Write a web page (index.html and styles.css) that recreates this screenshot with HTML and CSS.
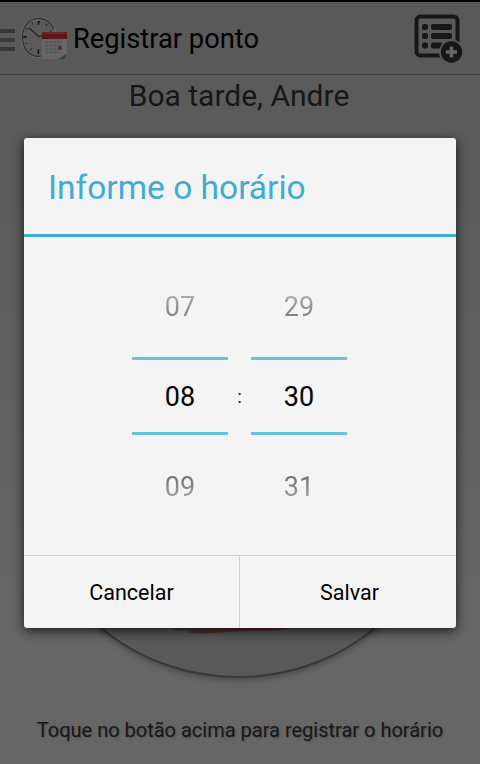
FILE: index.html
```html
<!DOCTYPE html>
<html lang="pt-BR">
<head>
    <meta charset="utf-8">
    <title>Registrar ponto</title>
    <link rel="stylesheet" href="styles.css">
</head>
<body>
    <div class="screen">
        <header class="action-bar">
            <div class="drawer-icon"><span></span><span></span><span></span></div>
            <svg class="app-icon" width="48" height="46" viewBox="0 0 48 46">
                <ellipse cx="18" cy="20.500" rx="17.500" ry="20" fill="#5a5a5a" stroke="#686868" stroke-width="1.500"/>
                <path d="M33 12C27-1 12-2 5 8C-2 19 2 34 11 38Q15 40 20 39" fill="none" stroke="#303030" stroke-width="1.200"/>
                <ellipse cx="17.500" cy="20" rx="13.500" ry="15" fill="none" stroke="#242424" stroke-width="2" stroke-dasharray="1 6.480"/>
                <path d="M17.500 4v4M2 20h4M17.500 32v5" stroke="#181818" stroke-width="1.500"/>
                <path d="M8 11l10 8.500 4-1" fill="none" stroke="#222" stroke-width="1.200"/>
                <path d="M21 17h25v20l-7 5H21z" fill="#676767"/>
                <path d="M21 15h25v7H21z" fill="#5f1618"/>
                <path d="M21 15h25v2H21z" fill="#6b2426"/>
                <path d="M24 25h17M24 28.500h17M24 32h17M24 35.500h15M26 24v13M30 24v13M34 24v13M38 24v11" stroke="#535957" stroke-width="1"/>
                <rect x="37.500" y="29" width="3" height="4" fill="#622326"/>
                <path d="M37 42l9-5-3 5z" fill="#3d3d3d"/>
            </svg>
            <h1 class="title">Registrar ponto</h1>
            <svg class="add-icon" width="50" height="50" viewBox="0 0 50 50">
                <rect x="3.500" y="3.500" width="41" height="39" rx="4" fill="none" stroke="#171717" stroke-width="4"/>
                <g fill="#171717">
                    <rect x="9" y="11" width="6" height="6" rx="2"/>
                    <rect x="9" y="20" width="6" height="6" rx="2"/>
                    <rect x="9" y="29.500" width="6" height="6" rx="2"/>
                    <rect x="18" y="11" width="21" height="6" rx="2"/>
                    <rect x="18" y="20" width="21" height="6" rx="2"/>
                    <rect x="18" y="29.500" width="12" height="6" rx="2"/>
                </g>
                <circle cx="38.500" cy="39" r="12.500" fill="#595959"/>
                <circle cx="38.500" cy="39" r="10.700" fill="#171717"/>
                <path d="M38.500 33.500v11M33 39h11" stroke="#666" stroke-width="3.600"/>
            </svg>
        </header>
        <main class="content">
            <p class="greeting">Boa tarde, Andre</p>
            <div class="punch-button">
                <svg width="406" height="378" viewBox="0 0 406 378">
                    <path d="M136 332q30-6 50-8h86q-14 9-44 9t-50 2q-20 1-26-1l20-3z" fill="#572f2f"/>
                    <path d="M136 332l30-5h40l-42 6z" fill="#453e3e"/>
                </svg>
            </div>
            <p class="hint">Toque no botão acima para registrar o horário</p>
        </main>
    </div>

    <div class="dialog">
        <h2 class="dialog-title">Informe o horário</h2>
        <div class="time-picker">
            <div class="picker">
                <div class="previous">07</div>
                <div class="current">08</div>
                <div class="next">09</div>
            </div>
            <div class="divider">:</div>
            <div class="picker">
                <div class="previous">29</div>
                <div class="current">30</div>
                <div class="next">31</div>
            </div>
        </div>
        <div class="buttons">
            <button type="button">Cancelar</button>
            <button type="button">Salvar</button>
        </div>
    </div>
</body>
</html>
```

FILE: styles.css
```css
* {
    box-sizing: border-box;
}

body {
    margin: 0;
    font-family: Roboto, sans-serif;
    background-color: #000;
    color: #000;
}

h1,
h2,
p {
    margin: 0;
    font-weight: normal;
    white-space: nowrap;
}

.screen {
    height: 764px;
    padding-top: 2px;
    display: flex;
    flex-direction: column;
    overflow: hidden;
}

.action-bar {
    height: 73px;
    flex: none;
    display: flex;
    align-items: center;
    background-color: #595959;
    border-bottom: 1px solid #3f3f3f;
}

.drawer-icon {
    width: 15px;
    margin-top: 3px;
    display: flex;
    flex-direction: column;
    gap: 5px;
}

.drawer-icon span {
    height: 4px;
    background-color: #393939;
}

.app-icon {
    margin: 3px 0 0 6px;
}

.title {
    margin: 2px 0 0 4px;
    font-size: 27.300px;
    line-height: 32px;
}

.add-icon {
    margin: 0 17px 1px auto;
}

.content {
    flex: 1;
    display: flex;
    flex-direction: column;
    align-items: center;
    background: linear-gradient(#5a5a5a, #666 80%);
}

.greeting {
    margin: 3px 2px 0 0;
    font-size: 30px;
    line-height: 36px;
    color: #171717;
}

.punch-button {
    width: 410px;
    height: 382px;
    margin: 182px 5px 0 0;
    flex: none;
    border-radius: 50%;
    border: 2px solid #383838;
    background-color: #595959;
    box-shadow: 0 2px 6px rgba(0, 0, 0, 0.3);
}

.hint {
    margin-top: 40px;
    font-size: 20px;
    line-height: 24px;
    color: #171717;
    text-shadow: 1px 1px 2px rgba(0, 0, 0, 0.25);
}

/* dialog floats over the screen */
.dialog {
    position: absolute;
    top: 138px;
    left: 24px;
    width: 432px;
    height: 490px;
    display: flex;
    flex-direction: column;
    background-color: #f4f4f4;
    border-radius: 3px;
    box-shadow: 0 3px 12px rgba(0, 0, 0, 0.75);
}

.dialog-title {
    height: 99px;
    padding-left: 24px;
    font-size: 33.500px;
    line-height: 99px;
    color: #40acd3;
    border-bottom: 3px solid #40acd0;
}

.time-picker {
    flex: 1;
    padding: 33px 1px 0 0;
    display: flex;
    justify-content: center;
    font-size: 27px;
    text-align: center;
}

.picker {
    width: 96px;
}

.previous,
.next {
    color: transparent;
    -webkit-background-clip: text;
    background-clip: text;
}

.previous {
    height: 87px;
    line-height: 74px;
    background-image: linear-gradient(#bbb 20%, #6c6c6c 65%);
}

.current {
    height: 78px;
    line-height: 74px;
    border-top: 3px solid #6cc0dc;
    border-bottom: 3px solid #6cc0dc;
}

.next {
    height: 87px;
    line-height: 105px;
    background-image: linear-gradient(#6c6c6c 45%, #bbb 85%);
}

.divider {
    width: 23px;
    padding-top: 115px;
    font-size: 19px;
    line-height: 24px;
    color: #222;
}

.buttons {
    height: 73px;
    display: flex;
    border-top: 1px solid #d2d2d2;
}

.buttons button {
    width: 217px;
    padding: 1px 0 0;
    border: none;
    background: none;
    font-family: inherit;
    font-size: 21.500px;
    color: #000;
}

.buttons button:first-child {
    width: 215px;
}

.buttons button + button {
    padding-left: 3px;
    border-left: 1px solid #d2d2d2;
}
```
